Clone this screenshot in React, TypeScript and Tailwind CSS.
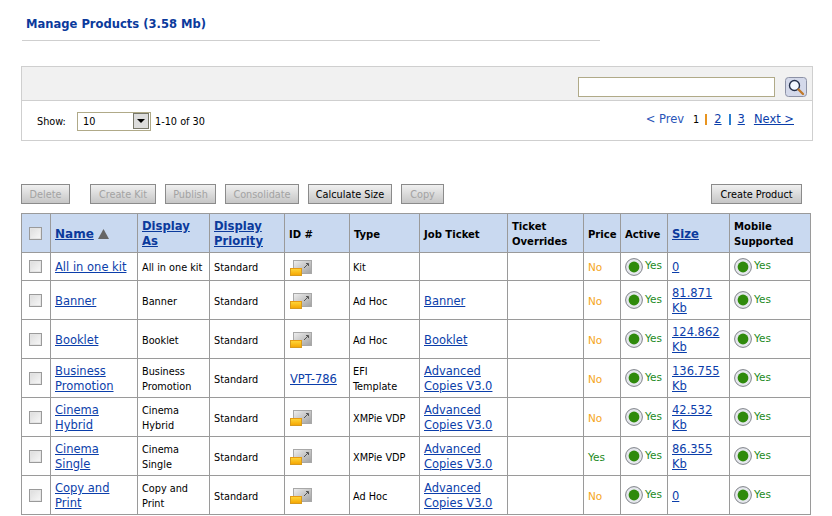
const linkCls = "text-[#0b3eaa] underline font-['DejaVu_Sans',sans-serif] text-[11.5px] leading-[15px]";

type Product = {
    name: string
    displayAs: string
    id?: string
    type: string
    ticket?: string
    price: 'Yes' | 'No'
    size: string
}

const products: Product[] = [
    { name: 'All in one kit', displayAs: 'All in one kit', type: 'Kit', price: 'No', size: '0' },
    { name: 'Banner', displayAs: 'Banner', type: 'Ad Hoc', ticket: 'Banner', price: 'No', size: '81.871 Kb' },
    { name: 'Booklet', displayAs: 'Booklet', type: 'Ad Hoc', ticket: 'Booklet', price: 'No', size: '124.862 Kb' },
    { name: 'Business Promotion', displayAs: 'Business Promotion', id: 'VPT-786', type: 'EFI Template', ticket: 'Advanced Copies V3.0', price: 'No', size: '136.755 Kb' },
    { name: 'Cinema Hybrid', displayAs: 'Cinema Hybrid', type: 'XMPie VDP', ticket: 'Advanced Copies V3.0', price: 'No', size: '42.532 Kb' },
    { name: 'Cinema Single', displayAs: 'Cinema Single', type: 'XMPie VDP', ticket: 'Advanced Copies V3.0', price: 'Yes', size: '86.355 Kb' },
    { name: 'Copy and Print', displayAs: 'Copy and Print', type: 'Ad Hoc', ticket: 'Advanced Copies V3.0', price: 'No', size: '0' },
]

const columnWidths = [29, 87, 72, 75, 65, 70, 88, 76, 37, 47, 62, 81]

function Check() {
    return <span className="block w-[13px] h-[13px] border border-[#9a9a9a] bg-gradient-to-br from-[#dcdcdc] to-[#f8f8f8] shadow-[inset_0_0_0_1px_#e4e4e4]" />
}

function ActiveDot() {
    return (
        <svg width="18" height="18" viewBox="0 0 18 18" className="shrink-0">
            <circle cx="9" cy="9" r="8.4" fill="#e6e8ee" stroke="#7f8288" strokeWidth="1" />
            <circle cx="9" cy="9" r="5.4" fill="#2f8a0c" />
        </svg>
    )
}

function YesFlag() {
    return (
        <div className="flex items-center gap-[2px]">
            <ActiveDot />
            <span className="text-[#1c8a1c] text-[10.5px] mt-[-2px] font-['DejaVu_Sans',sans-serif]">Yes</span>
        </div>
    )
}

function DetailIcon() {
    return (
        <svg width="22" height="16" viewBox="0 0 22 16" className="block">
            <defs>
                <linearGradient id="grayBox" x1="0" y1="0" x2="1" y2="1">
                    <stop offset="0" stopColor="#f0f0f0" />
                    <stop offset="1" stopColor="#a0a0a0" />
                </linearGradient>
                <linearGradient id="yellowBox" x1="0" y1="0" x2="0" y2="1">
                    <stop offset="0" stopColor="#ffd83a" />
                    <stop offset="1" stopColor="#f5a400" />
                </linearGradient>
            </defs>
            <rect x="3.5" y="0.5" width="18" height="13" fill="url(#grayBox)" stroke="#a8a8a8" />
            <path d="M14 8 L18 4 M16 3.5 H18.5 V6" fill="none" stroke="#555" strokeWidth="1" />
            <rect x="0.5" y="8.5" width="11" height="7" fill="url(#yellowBox)" stroke="#d79a1e" />
            <rect x="1" y="8" width="11" height="1" fill="#e89a10" />
        </svg>
    )
}

function SearchIcon() {
    return (
        <svg width="22" height="20" viewBox="0 0 22 20" className="block">
            <rect x="0.5" y="0.5" width="21" height="19" rx="3" fill="#d4d9ea" stroke="#8d92a6" />
            <circle cx="9.5" cy="8.5" r="5" fill="#f4f8ff" stroke="#25304a" strokeWidth="1.4" />
            <path d="M13.5 12.5 L18 17" stroke="#c27a2a" strokeWidth="2.4" strokeLinecap="round" />
        </svg>
    )
}

function ActionButton({ label, width, disabled, className }: { label: string, width: string, disabled?: boolean, className?: string }) {
    return (
        <button type="button" className={`h-[20px] pt-[1px] border border-[#8b8b8b] bg-gradient-to-b from-[#f0f0f0] to-[#c6c6c6] text-[10.8px] leading-[16px] text-center ${disabled ? 'text-[#a3a3a3]' : 'text-black'} ${width} ${className ?? ''}`}>
            {label}
        </button>
    )
}

function HeaderCell({ children, link }: { children: React.ReactNode, link?: boolean }) {
    return (
        <th className={`border border-[#9a9a9a] bg-[#c9d9f0] px-[4px] pt-[2px] align-middle text-left font-bold leading-[15px] ${link ? "text-[11.6px] text-[#0b3a9c] underline font-['DejaVu_Sans',sans-serif]" : "text-[11.2px] text-black"}`}>
            {children}
        </th>
    )
}

export default function App() {
    return (
        <div className="relative h-[516px] w-[832px] overflow-hidden bg-white text-black text-[10.8px] leading-[15px] font-['DejaVu_Sans_Condensed','Liberation_Sans',sans-serif]">
            <h1 className="pl-[26px] pt-[16px] h-[40px] text-[11.55px] leading-[17px] font-bold text-[#0b3a9c] font-['DejaVu_Sans',sans-serif]">
                Manage Products (3.58 Mb)
            </h1>
            <div className="ml-[22px] w-[578px] border-t border-[#cfcfcf]" />

            <div className="ml-[21px] mt-[25px] w-[792px] h-[75px] border border-[#cfcfcf]">
                <div className="flex items-end justify-end h-[34px] bg-[#f1f1f1] border-b border-[#cfcfcf] pr-[5px] pb-[3px]">
                    <input type="text" className="w-[197px] h-[20px] mr-[10px] bg-white border border-[#b0aa88]" />
                    <SearchIcon />
                </div>
                <div className="flex items-center justify-between h-[39px] pl-[15px] pr-[18px]">
                    <div className="flex items-center mt-[1px]">
                        <span className="w-[40px] mt-[1px]">Show:</span>
                        <div className="flex items-center justify-between w-[74px] h-[19px] pl-[5px] pr-[1px] border border-[#b0aa88] bg-white">
                            <span>10</span>
                            <span className="flex items-center justify-center w-[16px] h-[16px] bg-[#dcdcdc] border border-[#77776a]">
                                <span className="w-0 h-0 border-x-[4px] border-x-transparent border-t-[4px] border-t-black" />
                            </span>
                        </div>
                        <span className="ml-[4px] mt-[1px]">1-10 of 30</span>
                    </div>
                    <div className="flex items-center mt-[-3px] text-[11.5px] font-['DejaVu_Sans',sans-serif]">
                        <span className="text-[#2a55b8]">&lt; Prev</span>
                        <span className="ml-[9px] text-[10.8px] font-['DejaVu_Sans_Condensed',sans-serif]">1</span>
                        <span className="ml-[6px] w-[2px] h-[11px] bg-[#e8941f]" />
                        <a className={`${linkCls} ml-[7px]`}>2</a>
                        <span className="ml-[7px] w-[2px] h-[11px] bg-[#2a7fd0]" />
                        <a className={`${linkCls} ml-[7px]`}>3</a>
                        <a className={`${linkCls} ml-[9px]`}>Next &gt;</a>
                    </div>
                </div>
            </div>

            <div className="flex ml-[21px] mt-[43px] w-[781px]">
                <ActionButton label="Delete" width="w-[49px]" disabled />
                <ActionButton label="Create Kit" width="w-[66px]" disabled className="ml-[20px]" />
                <ActionButton label="Publish" width="w-[51px]" disabled className="ml-[9px]" />
                <ActionButton label="Consolidate" width="w-[74px]" disabled className="ml-[9px]" />
                <ActionButton label="Calculate Size" width="w-[84px]" className="ml-[9px]" />
                <ActionButton label="Copy" width="w-[43px]" disabled className="ml-[9px]" />
                <ActionButton label="Create Product" width="w-[91px]" className="ml-auto" />
            </div>

            <table className="ml-[21px] mt-[9px] w-[789px] table-fixed border-collapse">
                <colgroup>
                    {columnWidths.map((w, i) => <col key={i} style={{ width: w }} />)}
                </colgroup>
                <thead>
                    <tr className="h-[39px]">
                        <th className="border border-[#9a9a9a] bg-[#c9d9f0] pl-[7px]"><Check /></th>
                        <HeaderCell>
                            <span className="text-[12px] text-[#0b3a9c] underline font-['DejaVu_Sans',sans-serif]">Name</span>
                            <svg width="11" height="10" viewBox="0 0 11 10" className="inline-block ml-[4px] align-[-1px]">
                                <polygon points="5.5,0 11,10 0,10" fill="#666" />
                            </svg>
                        </HeaderCell>
                        <HeaderCell link>Display As</HeaderCell>
                        <HeaderCell link>Display Priority</HeaderCell>
                        <HeaderCell>ID #</HeaderCell>
                        <HeaderCell>Type</HeaderCell>
                        <HeaderCell>Job Ticket</HeaderCell>
                        <HeaderCell>Ticket Overrides</HeaderCell>
                        <HeaderCell>Price</HeaderCell>
                        <HeaderCell>Active</HeaderCell>
                        <HeaderCell link>Size</HeaderCell>
                        <HeaderCell>Mobile Supported</HeaderCell>
                    </tr>
                </thead>
                <tbody>
                    {products.map((p, i) => (
                        <tr key={p.name} className={i === 0 ? 'h-[28px]' : 'h-[39px]'}>
                            <td className="border border-[#9a9a9a] pl-[7px]"><Check /></td>
                            <td className="border border-[#9a9a9a] px-[4px] pt-[2px]"><a className={linkCls}>{p.name}</a></td>
                            <td className="border border-[#9a9a9a] pl-[4px] pr-[12px] pt-[2px]">{i === 0 ? <span className="whitespace-nowrap">{p.displayAs}</span> : p.displayAs}</td>
                            <td className="border border-[#9a9a9a] px-[4px] pt-[2px]">Standard</td>
                            <td className="border border-[#9a9a9a] px-[5px] pt-[2px]">
                                {p.id ? <a className={linkCls}>{p.id}</a> : <DetailIcon />}
                            </td>
                            <td className="border border-[#9a9a9a] pl-[3px] pr-[9px] pt-[2px]">{p.type}</td>
                            <td className="border border-[#9a9a9a] px-[4px] pt-[2px]">
                                {p.ticket && <a className={linkCls}>{p.ticket}</a>}
                            </td>
                            <td className="border border-[#9a9a9a]" />
                            <td className={`border border-[#9a9a9a] px-[4px] pt-[2px] text-[10.5px] font-['DejaVu_Sans',sans-serif] ${p.price === 'Yes' ? 'text-[#1c8a1c]' : 'text-[#f5a623]'}`}>{p.price}</td>
                            <td className="border border-[#9a9a9a] px-[4px]"><YesFlag /></td>
                            <td className="border border-[#9a9a9a] px-[4px] pt-[2px]"><a className={linkCls}>{p.size}</a></td>
                            <td className="border border-[#9a9a9a] px-[4px]"><YesFlag /></td>
                        </tr>
                    ))}
                </tbody>
            </table>
        </div>
    )
}
